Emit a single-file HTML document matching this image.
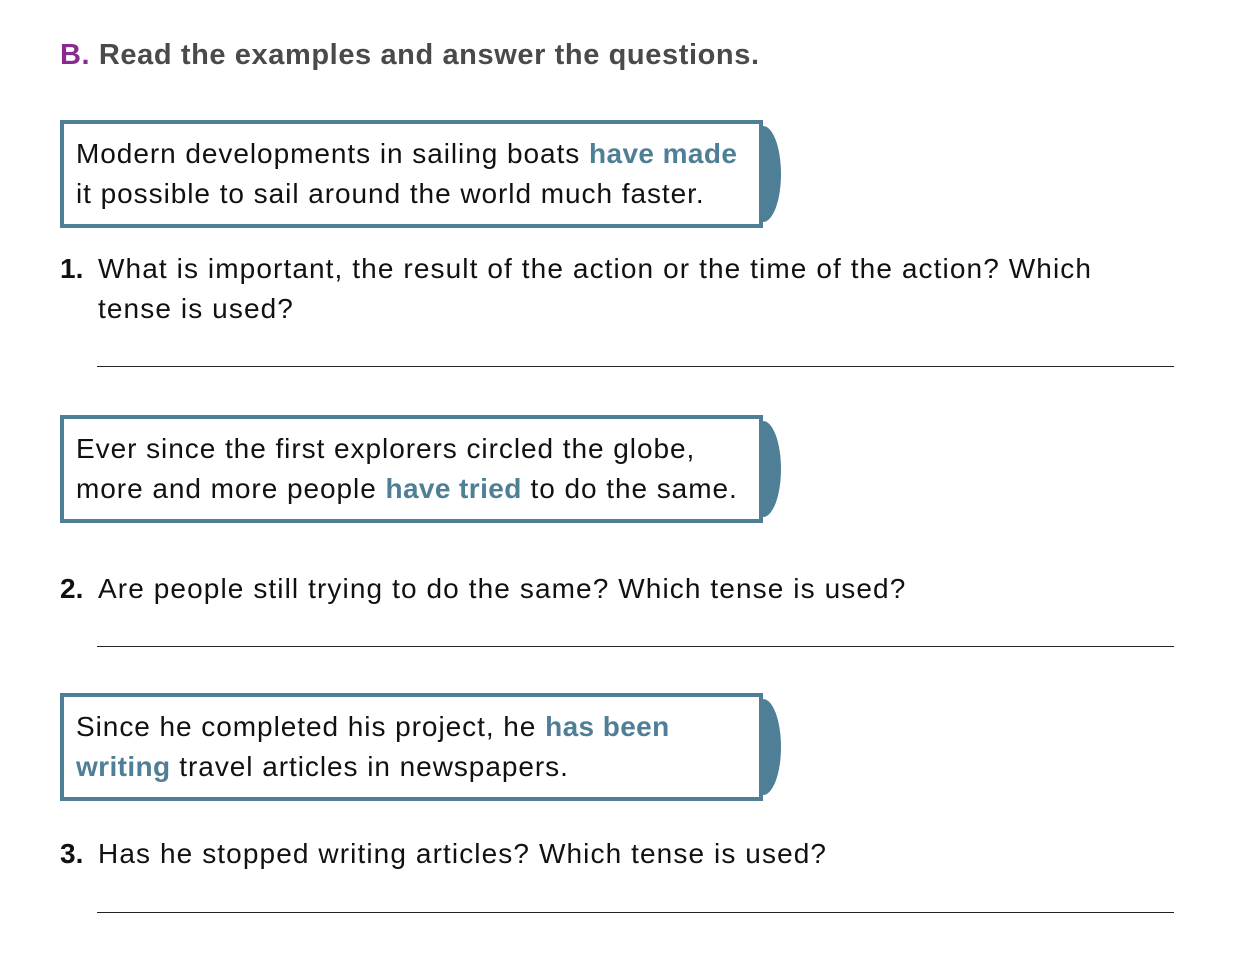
<!DOCTYPE html>
<html><head><style>
body{margin:0;width:1235px;height:978px;background:#fff;position:relative;font-family:"Liberation Sans",sans-serif;color:#111;overflow:hidden}
.a{position:absolute;white-space:nowrap}
.h{left:60px;top:39px;font-size:29px;font-weight:bold;color:#4a4a4a;letter-spacing:0.6px}
.h b{color:#8a2a8f}
.box{position:absolute;left:60px;width:695px;height:100px;border:4px solid #4f7f96;background:#fff}
.tab{position:absolute;left:745px;width:36px;height:96px;background:#4f7f96;border-radius:0 50% 50% 0/0 50% 50% 0}
.t{position:absolute;left:76px;font-size:28px;line-height:40px;letter-spacing:0.95px;white-space:nowrap}
.hl{color:#4f7f96;font-weight:bold;letter-spacing:0.4px}
.q{font-size:28px;line-height:40px;letter-spacing:1.1px}
.n{position:absolute;left:60px;font-weight:bold;letter-spacing:0}
.line{position:absolute;left:97px;width:1077px;height:1px;background:#222}
</style></head><body>
<div class="a h"><b>B.</b> Read the examples and answer the questions.</div>

<div class="tab" style="top:126px"></div>
<div class="box" style="top:120px"></div>
<div class="t" style="top:134px">Modern developments in sailing boats <span class="hl">have made</span><br>it possible to sail around the world much faster.</div>

<div class="a n q" style="top:249px">1.</div>
<div class="a q" style="left:98px;top:249px">What is important, the result of the action or the time of the action? Which<br>tense is used?</div>
<div class="line" style="top:366px"></div>

<div class="tab" style="top:421px"></div>
<div class="box" style="top:415px"></div>
<div class="t" style="top:429px">Ever since the first explorers circled the globe,<br>more and more people <span class="hl">have tried</span> to do the same.</div>

<div class="a n q" style="top:569px">2.</div>
<div class="a q" style="left:98px;top:569px">Are people still trying to do the same? Which tense is used?</div>
<div class="line" style="top:646px"></div>

<div class="tab" style="top:699px"></div>
<div class="box" style="top:693px"></div>
<div class="t" style="top:707px">Since he completed his project, he <span class="hl">has been</span><br><span class="hl">writing</span> travel articles in newspapers.</div>

<div class="a n q" style="top:834px">3.</div>
<div class="a q" style="left:98px;top:834px">Has he stopped writing articles? Which tense is used?</div>
<div class="line" style="top:912px"></div>
</body></html>
